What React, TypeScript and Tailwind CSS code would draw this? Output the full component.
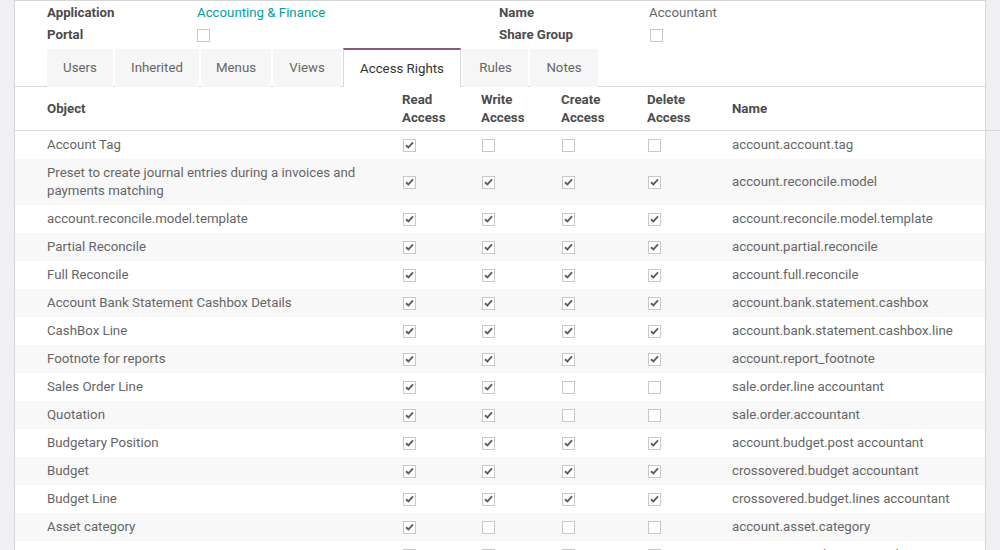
import { useState } from "react"

type rowType = {
  object: string,
  read: boolean,
  write: boolean,
  create: boolean,
  del: boolean,
  name: string,
}

const rows: rowType[] = [
  { object: "Account Tag", read: true, write: false, create: false, del: false, name: "account.account.tag" },
  { object: "Preset to create journal entries during a invoices and payments matching", read: true, write: true, create: true, del: true, name: "account.reconcile.model" },
  { object: "account.reconcile.model.template", read: true, write: true, create: true, del: true, name: "account.reconcile.model.template" },
  { object: "Partial Reconcile", read: true, write: true, create: true, del: true, name: "account.partial.reconcile" },
  { object: "Full Reconcile", read: true, write: true, create: true, del: true, name: "account.full.reconcile" },
  { object: "Account Bank Statement Cashbox Details", read: true, write: true, create: true, del: true, name: "account.bank.statement.cashbox" },
  { object: "CashBox Line", read: true, write: true, create: true, del: true, name: "account.bank.statement.cashbox.line" },
  { object: "Footnote for reports", read: true, write: true, create: true, del: true, name: "account.report_footnote" },
  { object: "Sales Order Line", read: true, write: true, create: false, del: false, name: "sale.order.line accountant" },
  { object: "Quotation", read: true, write: true, create: false, del: false, name: "sale.order.accountant" },
  { object: "Budgetary Position", read: true, write: true, create: true, del: true, name: "account.budget.post accountant" },
  { object: "Budget", read: true, write: true, create: true, del: true, name: "crossovered.budget accountant" },
  { object: "Budget Line", read: true, write: true, create: true, del: true, name: "crossovered.budget.lines accountant" },
  { object: "Asset category", read: true, write: false, create: false, del: false, name: "account.asset.category" },
  { object: "Account Asset Depreciation Line", read: true, write: true, create: true, del: true, name: "account.asset.depreciation.line" },
]

const tabs = [
  { label: "Users", w: "w-[66px]" },
  { label: "Inherited", w: "w-[84px]" },
  { label: "Menus", w: "w-[70px]" },
  { label: "Views", w: "w-[68px]" },
  { label: "Access Rights", w: "w-[118px]" },
  { label: "Rules", w: "w-[65px]" },
  { label: "Notes", w: "w-[68px]" },
]

const Check = ({ checked }: { checked: boolean }) => {
  return (
    <div className="w-[13px] h-[13px] border border-[#c8c8c8] bg-white flex items-center justify-center">
      {checked ? (
        <svg width="9" height="8" viewBox="0 0 9 8">
          <path d="M1 4.2 L3.4 6.4 L8 1.4" fill="none" stroke="#5e5e5e" strokeWidth="1.9" />
        </svg>
      ) : null}
    </div>
  )
}

const App = () => {
  const [active] = useState("Access Rights")

  return (
    <div className="w-[1000px] h-[550px] overflow-hidden bg-[#f0eff4] font-['Roboto',sans-serif] text-[13.25px]">
      <div className="ml-[14px] w-[972px] h-[560px] bg-white border-x border-t border-[#d8d8d8]">
        {/* header fields */}
        <div className="grid grid-cols-[150px_302px_150px_1fr] pl-[32px] pt-px leading-[22px]">
          <div className="font-bold text-[#4c4c4c]">Application</div>
          <div className="text-[#00a09d]">Accounting &amp; Finance</div>
          <div className="font-bold text-[#4c4c4c]">Name</div>
          <div className="text-[#666]">Accountant</div>
          <div className="font-bold text-[#4c4c4c]">Portal</div>
          <div className="flex items-center"><Check checked={false} /></div>
          <div className="font-bold text-[#4c4c4c]">Share Group</div>
          <div className="flex items-center pl-px"><Check checked={false} /></div>
        </div>

        {/* notebook tabs */}
        <div className="mt-[2px] flex gap-[2px] pl-[32px] border-b border-[#d8d8d8] h-[39px]">
          {tabs.map((t) =>
            t.label === active ? (
              <div key={t.label} className={`${t.w} h-[39px] -mb-px flex items-center justify-center bg-white border-x border-t-2 border-[#d8d8d8] border-t-[#875a7b] text-[#333]`}>
                {t.label}
              </div>
            ) : (
              <div key={t.label} className={`${t.w} mt-px h-[38px] flex items-center justify-center bg-[#f6f6f6] text-[#666]`}>
                {t.label}
              </div>
            )
          )}
        </div>

        {/* table header */}
        <div className="w-[985px] h-[44px] grid grid-cols-[387px_79px_80px_86px_85px_1fr] items-center border-b border-[#d8d8d8] font-bold text-[#4c4c4c] leading-[18px]">
          <div className="pl-[32px]">Object</div>
          <div>Read<br />Access</div>
          <div>Write<br />Access</div>
          <div>Create<br />Access</div>
          <div>Delete<br />Access</div>
          <div>Name</div>
        </div>

        {/* rows */}
        {rows.map((r, i) => (
          <div
            key={r.name}
            className={`grid grid-cols-[387px_79px_80px_86px_85px_1fr] items-center py-[5px] leading-[18px] text-[#666] ${i % 2 === 1 ? "bg-[#f8f8f8]" : "bg-white"}`}
          >
            <div className="pl-[32px] pr-[20px]">{r.object}</div>
            <div className="pl-px"><Check checked={r.read} /></div>
            <div className="pl-px"><Check checked={r.write} /></div>
            <div className="pl-px"><Check checked={r.create} /></div>
            <div className="pl-px"><Check checked={r.del} /></div>
            <div>{r.name}</div>
          </div>
        ))}
      </div>
    </div>
  )
}

export default App
